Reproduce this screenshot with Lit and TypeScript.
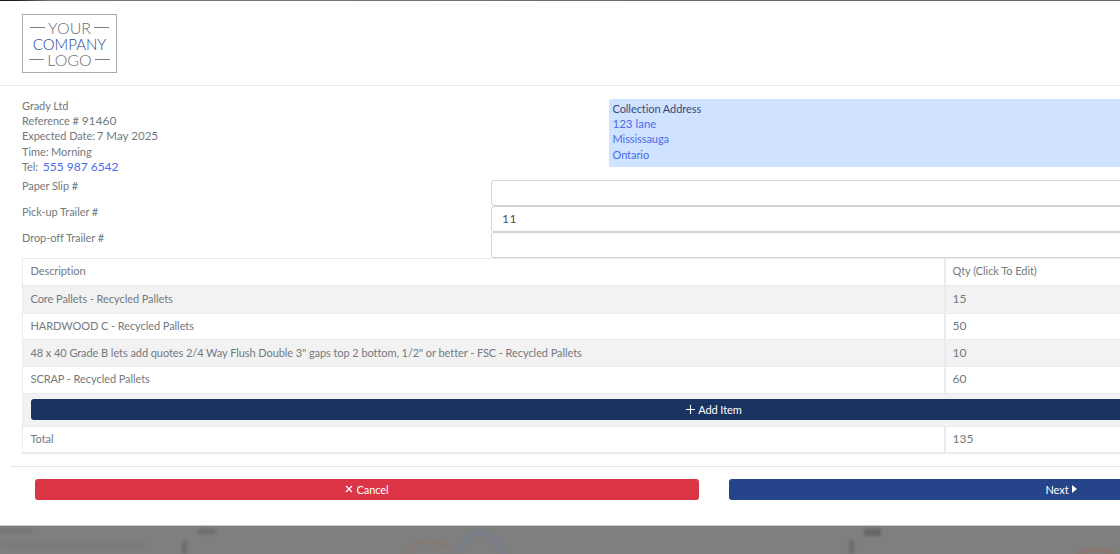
import { LitElement, html, css } from "lit";
import { customElement } from "lit/decorators.js";

const items: [string, string][] = [
  ["Core Pallets - Recycled Pallets", "15"],
  ["HARDWOOD C - Recycled Pallets", "50"],
  ['48 x 40 Grade B lets add quotes 2/4 Way Flush Double 3" gaps top 2 bottom, 1/2" or better - FSC - Recycled Pallets', "10"],
  ["SCRAP - Recycled Pallets", "60"],
];

@customElement("app-root")
export class AppRoot extends LitElement {
  static styles = css`
    :host { display: block; width: 1120px; height: 554px; overflow: hidden; position: relative; background: #7f7f7f;
      font-family: "Lato", "Liberation Sans", sans-serif; font-size: 11px; letter-spacing: -0.07px; line-height: 15.2px; color: #74797e; }
    .topstrip { height: 1px; background: linear-gradient(90deg, #111 0, #222 18px, #777 50px, #666 100%); }
    .modal { width: 1400px; height: 525px; background: #fff; box-sizing: border-box; border-bottom: 1px solid #ccc; display: flex; flex-direction: column; position: relative; }
    .head { height: 85px; box-sizing: border-box; padding: 13px 22px 0; border-bottom: 1px solid #e9ecef; flex: none; }
    .logo { width: 95px; height: 59px; box-sizing: border-box; border: 1px solid #a9abae; display: flex; flex-direction: column; align-items: center; justify-content: center; font-size: 16px; letter-spacing: 0; line-height: 16px; color: #6d6e70; font-weight: 300; }
    .logo div { display: flex; align-items: center; gap: 3px; }
    .logo i { width: 15px; height: 1px; background: #808285; display: block; }
    .logo .co { color: #1f3f8f; font-size: 15px; font-weight: 300; }
    .info { display: flex; padding: 12px 22px 0; flex: none; height: 94px; box-sizing: border-box; }
    .left { width: 587px; flex: none; }
    .num { font-size: 12px; letter-spacing: 0; }
    .date { font-size: 11.6px; letter-spacing: 0; margin-left: -1px; }
    .phone { margin-left: 2px; }
    .addr { width: 700px; height: 68px; margin-top: 1px; flex: none; background: #cfe2ff; border-radius: 2px; padding: 2px 3.5px; box-sizing: border-box; color: #4a6cf0; }
    .addr b { font-weight: 400; color: #384a78; display: block; }
    .lane { font-size: 11.5px; letter-spacing: 0; }
    a { color: #4a6cf0; text-decoration: none; }
    .field { display: flex; height: 26px; padding-left: 22px; flex: none; }
    .field label { width: 469px; flex: none; position: relative; top: -2px; }
    .field .input { width: 800px; height: 26px; box-sizing: border-box; border: 1px solid #ced4da; border-radius: 3px; padding: 3px 10px; color: #495057; line-height: 17px; font-size: 12px; letter-spacing: 0.6px; }
    .grid { margin-left: 22px; width: 1300px; border: 1px solid #e9ecef; border-bottom: 0; flex: none; }
    .row { display: grid; grid-template-columns: 921px 1fr; border-bottom: 1px solid #e9ecef; box-sizing: border-box; }
    .row > div { padding: 0 7.5px 2px; display: flex; align-items: center; }
    .row > div + div { border-left: 2px solid #e9ecef; padding-left: 6.5px; }
    .r-head { height: 28px; border-bottom-width: 2px; }
    .r-item { height: 26.7px; }
    .odd { background: #f2f2f2; }
    .addrow { height: 33px; background: #f2f2f2; padding: 5px 8px 0; box-sizing: border-box; border-bottom: 1px solid #e9ecef; }
    .btn { height: 21px; border-radius: 3px; color: #fff; display: flex; align-items: center; justify-content: center; gap: 3px; }
    .add { background: #1b3360; width: 1284px; }
    .addin { display: flex; align-items: center; gap: 3px; position: relative; left: 41px; }
    .r-total { height: 27px; border-bottom-width: 2px; }
    hr { margin: 12px 0 0 10px; width: 1380px; border: 0; border-top: 1px solid #e4e4ec; flex: none; }
    .foot { display: flex; padding: 12px 0 0 35px; gap: 30px; flex: none; }
    .cancel { width: 664px; background: #dc3545; }
    .next { width: 664px; background: #25448a; }
    svg { display: block; flex: none; }
    .bg { position: absolute; left: 0; top: 526px; filter: blur(1.5px); }
  `;

  render() {
    return html`
      <div class="topstrip"></div>
      <div class="modal">
        <div class="head">
          <div class="logo">
            <div><i></i>YOUR<i></i></div>
            <div class="co">COMPANY</div>
            <div><i></i>LOGO<i></i></div>
          </div>
        </div>
        <div class="info">
          <div class="left">
            <div>Grady Ltd</div>
            <div>Reference # <span class="num">91460</span></div>
            <div>Expected Date: <span class="date">7 May 2025</span></div>
            <div>Time: Morning</div>
            <div>Tel: <a class="num phone">555 987 6542</a></div>
          </div>
          <div class="addr">
            <b>Collection Address</b>
            <div class="lane">123 lane</div>
            <div>Mississauga</div>
            <div>Ontario</div>
          </div>
        </div>
        <div class="field"><label>Paper Slip #</label><div class="input"></div></div>
        <div class="field"><label>Pick-up Trailer #</label><div class="input">11</div></div>
        <div class="field"><label>Drop-off Trailer #</label><div class="input"></div></div>
        <div class="grid">
          <div class="row r-head"><div>Description</div><div>Qty (Click To Edit)</div></div>
          ${items.map((it, i) => html`<div class="row r-item ${i % 2 === 0 ? "odd" : ""}"><div>${it[0]}</div><div class="num">${it[1]}</div></div>`)}
          <div class="addrow"><div class="btn add"><div class="addin">
            <svg width="9" height="9" viewBox="0 0 9 9"><path d="M4.5 0v9M0 4.5h9" stroke="#fff" stroke-width="1.1"/></svg>
            <span>Add Item</span>
          </div></div></div>
          <div class="row r-total"><div>Total</div><div class="num">135</div></div>
        </div>
        <hr />
        <div class="foot">
          <div class="btn cancel">
            <svg width="8" height="8" viewBox="0 0 8 8"><path d="M1 1l6 6M7 1L1 7" stroke="#fff" stroke-width="1.3"/></svg>
            <span>Cancel</span>
          </div>
          <div class="btn next">
            <span>Next</span>
            <svg width="5" height="8" viewBox="0 0 5 8"><path d="M0 0l5 4-5 4z" fill="#fff"/></svg>
          </div>
        </div>
      </div>
      <svg class="bg" width="1120" height="28" viewBox="0 0 1120 28">
        <path d="M405 28Q430 2 455 28" stroke="#8c7468" stroke-width="2" fill="none"/>
        <path d="M455 28Q480 -16 505 28" stroke="#6f7e98" stroke-width="2" fill="none"/>
        <path d="M1075 30Q1096 18 1118 30" stroke="#96705c" stroke-width="2" fill="none"/>
        <rect x="198" y="3" width="18" height="5" fill="#6c6c6c"/>
        <rect x="864" y="3" width="17" height="7" fill="#666"/>
        <rect x="182" y="15" width="5" height="13" fill="#6c6c6c"/>
        <rect x="849" y="14" width="5" height="14" fill="#6c6c6c"/>
        <rect x="0" y="3" width="32" height="4" fill="#747474"/>
        <rect x="0" y="17" width="146" height="5" fill="#7a7a7a"/>
      </svg>
    `;
  }
}
